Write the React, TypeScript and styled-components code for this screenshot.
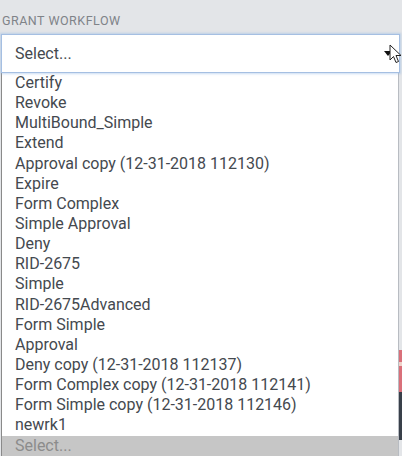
import React from "react";
import styled, { createGlobalStyle } from "styled-components";

const Global = createGlobalStyle`
  html, body { margin: 0; padding: 0; background: #e3e5e8; }
  body { font-family: Roboto, "Liberation Sans", Arial, sans-serif; overflow: hidden; }
`;

const Page = styled.div`
  width: 402px;
  height: 456px;
  position: relative;
  overflow: hidden;
  background: #e3e5e8;
`;

const BackdropStrip = styled.div`
  position: absolute;
  right: 0;
  top: 0;
  width: 3px;
  height: 456px;
  display: flex;
  flex-direction: column;
`;

const StripPart = styled.div<{ $h: number; $c: string }>`
  height: ${(p) => p.$h}px;
  background: ${(p) => p.$c};
`;

const Field = styled.div`
  padding: 14px 2px 0 1px;
  display: flex;
  flex-direction: column;
`;

const Label = styled.div`
  font-size: 12.5px;
  letter-spacing: 0.5px;
  color: #7f8388;
  line-height: 14px;
  padding-left: 1px;
  margin-bottom: 6px;
  text-transform: uppercase;
`;

const SelectBox = styled.div`
  height: 37px;
  border: 1px solid #a5bfe2;
  box-shadow: 0 0 2px 1px rgba(150, 185, 230, 0.5);
  background: #fff;
  display: flex;
  align-items: center;
  padding-left: 13px;
  padding-right: 7px;
  font-size: 16px;
  color: #44494f;
  position: relative;
`;

const SelectText = styled.span`
  flex: 1;
`;

const Arrow = styled.div`
  width: 0;
  height: 0;
  border-left: 4px solid transparent;
  border-right: 4px solid transparent;
  border-top: 5px solid #111;
`;

const Cursor = styled.svg`
  position: absolute;
  right: -4px;
  top: 9px;
`;

const List = styled.ul`
  list-style: none;
  margin: 0 1px 0 0;
  padding: 0;
  background: #fff;
  border-left: 1px solid #8a8a8a;
  border-right: 1px solid #b8bcc2;
`;

const Item = styled.li<{ $placeholder?: boolean }>`
  height: 20.15px;
  line-height: 20.15px;
  font-size: 16px;
  padding-left: 13px;
  color: ${(p) => (p.$placeholder ? "#8c8c8c" : "#44494f")};
  background: ${(p) => (p.$placeholder ? "#c6c6c6" : "#fff")};
  white-space: nowrap;
`;

const items = [
  "Certify",
  "Revoke",
  "MultiBound_Simple",
  "Extend",
  "Approval copy (12-31-2018 112130)",
  "Expire",
  "Form Complex",
  "Simple Approval",
  "Deny",
  "RID-2675",
  "Simple",
  "RID-2675Advanced",
  "Form Simple",
  "Approval",
  "Deny copy (12-31-2018 112137)",
  "Form Complex copy (12-31-2018 112141)",
  "Form Simple copy (12-31-2018 112146)",
  "newrk1",
];

export default function App() {
  return (
    <Page>
      <Global />
      <BackdropStrip>
        <StripPart $h={350} $c="#e3e5e8" />
        <StripPart $h={12} $c="#d9707a" />
        <StripPart $h={4} $c="#f0d0c8" />
        <StripPart $h={26} $c="#d9707a" />
        <StripPart $h={48} $c="#39404a" />
        <StripPart $h={16} $c="#e3e5e8" />
      </BackdropStrip>
      <Field>
        <Label>Grant Workflow</Label>
        <SelectBox>
          <SelectText>Select...</SelectText>
          <Arrow />
          <Cursor width="14" height="20" viewBox="0 0 14 20">
            <path
              d="M1 1 L1 16 L4.5 12.5 L7 18.5 L9.5 17.5 L7 11.5 L12 11.5 Z"
              fill="#fff"
              stroke="#222"
              strokeWidth="1"
              strokeLinejoin="round"
            />
          </Cursor>
        </SelectBox>
        <List>
          {items.map((t) => (
            <Item key={t}>{t}</Item>
          ))}
          <Item $placeholder>Select...</Item>
        </List>
      </Field>
    </Page>
  );
}
